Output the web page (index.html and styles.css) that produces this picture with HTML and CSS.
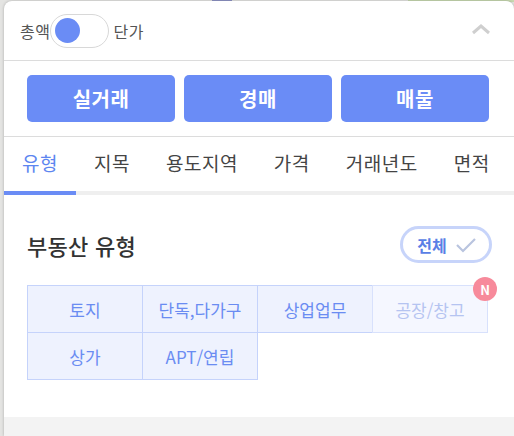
FILE: index.html
```html
<!DOCTYPE html>
<html lang="ko">
<head>
<meta charset="utf-8">
<link rel="stylesheet" href="styles.css">
</head>
<body>
<div class="backdrop">
  <div class="map-road blue"></div>
  <div class="map-road green"></div>
</div>
<div class="panel">
  <div class="header">
    <span class="lbl">총액</span>
    <span class="toggle"><span class="knob"></span></span>
    <span class="lbl">단가</span>
    <svg class="chev" width="20" height="12" viewBox="0 0 20 12"><path d="M2 10 L10 3 L18 10" fill="none" stroke="#cfcfcf" stroke-width="3"/></svg>
  </div>
  <div class="btns">
    <button class="btn">실거래</button>
    <button class="btn">경매</button>
    <button class="btn">매물</button>
  </div>
  <div class="tabs">
    <div class="tab active">유형</div>
    <div class="tab">지목</div>
    <div class="tab">용도지역</div>
    <div class="tab">가격</div>
    <div class="tab">거래년도</div>
    <div class="tab">면적</div>
  </div>
  <div class="content">
    <div class="title-row">
      <h2 class="title">부동산 유형</h2>
      <span class="all-pill">전체
        <svg width="22" height="16" viewBox="0 0 22 16"><path d="M2 8 L8 14 L20 2" fill="none" stroke="#b9c4df" stroke-width="2.2"/></svg>
      </span>
    </div>
    <div class="grid">
      <div class="cell">토지</div>
      <div class="cell">단독,다가구</div>
      <div class="cell">상업업무</div>
      <div class="cell disabled">공장/창고<span class="badge">N</span></div>
      <div class="cell">상가</div>
      <div class="cell">APT/연립</div>
    </div>
  </div>
  <div class="footer"></div>
</div>
</body>
</html>
```

FILE: styles.css
```css
* { box-sizing: border-box; }
html, body { margin: 0; padding: 0; }
body {
  width: 514px;
  height: 436px;
  overflow: hidden;
  background: #e4e4e2;
  font-family: "Noto Sans CJK KR", "Noto Sans", sans-serif;
  position: relative;
}
.backdrop { position: absolute; inset: 0; }
.map-road { position: absolute; top: 0; height: 2px; }
.map-road.blue { left: 212px; width: 20px; background: #8e93c4; }
.map-road.green { left: 408px; width: 106px; background: #c7d8b0; }
.panel {
  position: relative;
  margin: 1px 0 0 4px;
  width: 510px;
  height: 435px;
  background: #fff;
  border-radius: 8px 8px 0 0;
  box-shadow: 0 0 3px rgba(0,0,0,0.25);
  display: flex;
  flex-direction: column;
}
.header {
  height: 60px;
  border-bottom: 1px solid #dcdcdc;
  display: flex;
  align-items: center;
  padding: 0 0 0 16px;
}
.lbl { font-size: 16px; letter-spacing: 0.5px; color: #555; }
.toggle {
  width: 59px;
  height: 34px;
  border: 1px solid #d8d8d8;
  border-radius: 17px;
  margin: 0 4px 0 0;
  display: flex;
  align-items: center;
  padding-left: 4px;
}
.knob { width: 25px; height: 25px; border-radius: 50%; background: #6a8cf5; }
.chev { margin-left: auto; margin-right: 23px; margin-top: -4px; }
.btns {
  display: flex;
  gap: 9px;
  padding: 14px 23px 14px 23px;
  border-bottom: 1px solid #dcdcdc;
}
.btn {
  width: 148px;
  height: 47px;
  border: none;
  border-radius: 5px;
  background: #6a8cf6;
  color: #fff;
  font-family: inherit;
  font-size: 20px;
  letter-spacing: 0.5px;
  font-weight: 700;
}
.tabs {
  display: flex;
  height: 58px;
  border-bottom: 4px solid #efefef;
}
.tab {
  padding: 0 18px 3px;
  display: flex;
  align-items: center;
  font-size: 19px;
  letter-spacing: 0.5px;
  color: #444;
  margin-bottom: -4px;
  border-bottom: 4px solid transparent;
}
.tab.active { color: #5d86f0; border-bottom-color: #6a8cf5; }
.content { padding: 31px 22px 0 23px; flex: 1; }
.title-row { display: flex; align-items: center; justify-content: space-between; }
.title { margin: 0; font-size: 22px; letter-spacing: 0.3px; font-weight: 500; color: #333; }
.all-pill {
  width: 92px;
  height: 37px;
  border: 3px solid #c7d4fa;
  border-radius: 19px;
  display: flex;
  align-items: center;
  justify-content: center;
  gap: 8px;
  font-size: 16px;
  font-weight: 700;
  color: #5a7fe6;
  padding-left: 2px;
}
.grid {
  margin-top: 22px;
  display: grid;
  grid-template-columns: repeat(4, 115px);
  grid-auto-rows: 47px;
}
.cell {
  position: relative;
  display: flex;
  align-items: center;
  justify-content: center;
  background: #eef2fe;
  border: 1px solid #c5d3fb;
  margin: 0 -1px -1px 0;
  font-size: 17px;
  color: #6a8cf2;
}
.cell.disabled { background: #f5f7ff; color: #b5c4f1; border-color: #d8e1fc; }
.badge {
  position: absolute;
  top: -9px;
  right: -10px;
  width: 24px;
  height: 24px;
  border-radius: 50%;
  background: #f78a9b;
  color: #fff;
  font-size: 13px;
  font-weight: 700;
  display: flex;
  align-items: center;
  justify-content: center;
}
.footer { height: 19px; background: #f3f3f3; }
```
